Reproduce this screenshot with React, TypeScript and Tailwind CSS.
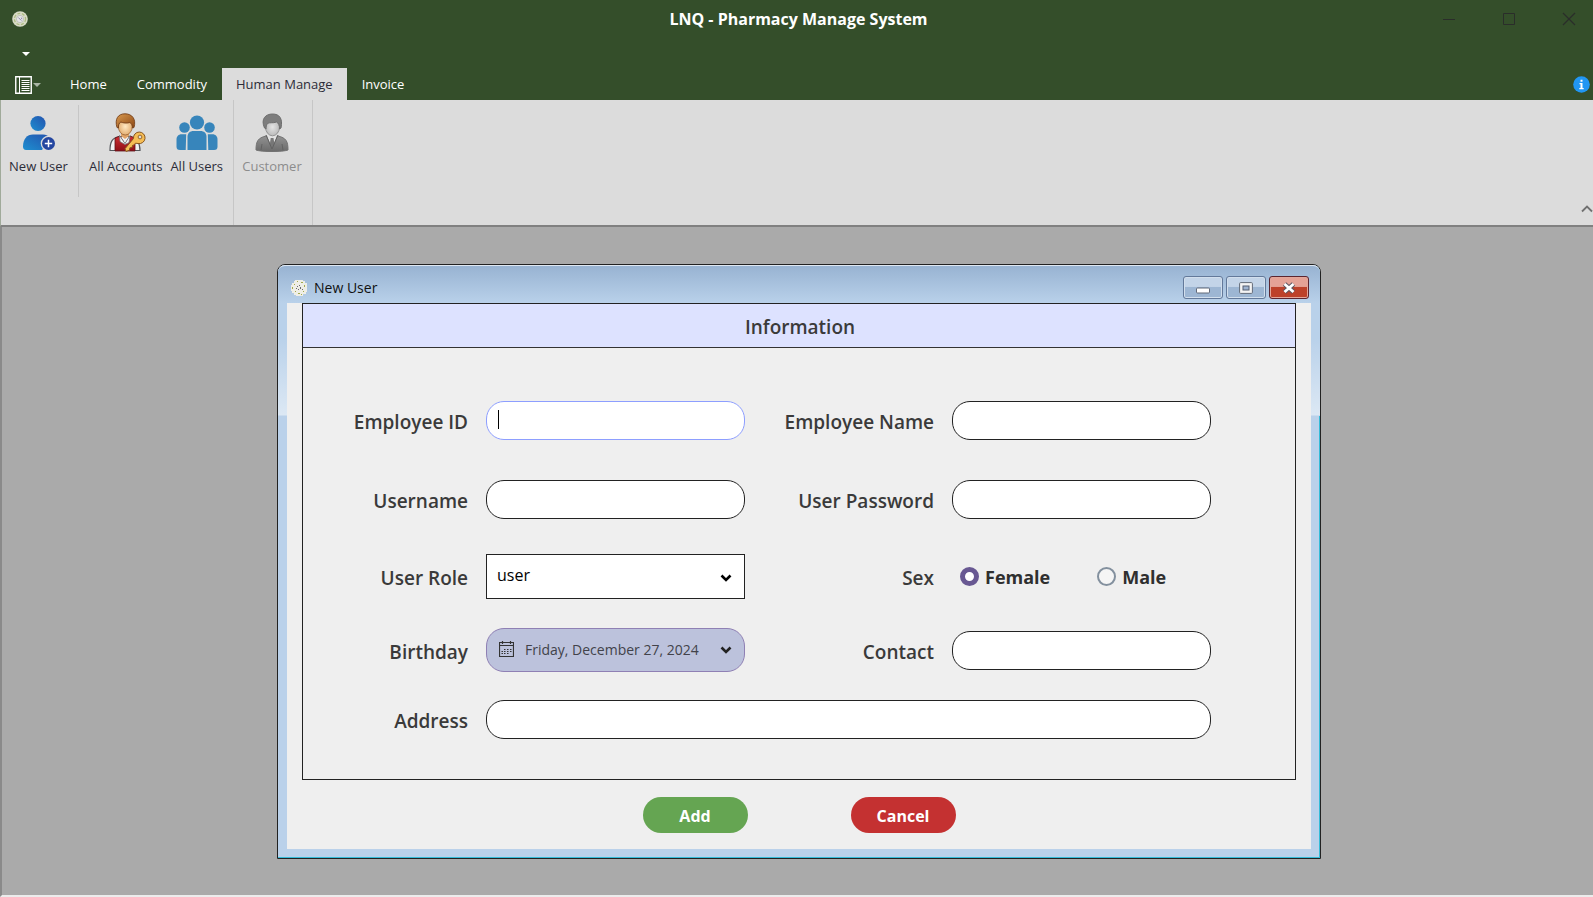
import React, { useState } from "react";

const labelText = "pt-[3px] pr-[18px] text-right text-[19px] leading-6 font-semibold text-[#3a3a3a]";
const textInput =
  "h-[39px] w-full rounded-[18px] border border-[#222] bg-white px-3 text-base text-black outline-none focus:border-[#8d9eff]";

function DiscIcon({ className }: { className: string }) {
  return (
    <svg className={className} viewBox="0 0 16 16" aria-hidden="true">
      <circle cx="8" cy="8" r="7.8" fill="#d9dcc8" />
      <circle cx="8" cy="8" r="5.6" fill="none" stroke="#aebd84" strokeWidth="1.3" strokeDasharray="3 1.6" />
      <circle cx="8" cy="8" r="3.6" fill="#e6e6e8" stroke="#b5b9b0" strokeWidth=".7" />
      <path d="M6.3 6.5l3 3M9.3 6.6l.6 1.6" stroke="#8a86a8" strokeWidth="1" />
    </svg>
  );
}

function SpeckIcon({ className }: { className: string }) {
  return (
    <svg className={className} viewBox="0 0 16 16" aria-hidden="true">
      <path d="M4 0h8v1h2v2h2v9h-1v2h-3v2H5v-1H3v-2H1v-2H0V5h1V3h2V1h1z" fill="#efeee6" />
      <path
        d="M6 1h1v1H6zM10 2h2v1h-2zM3 4h1v1H3zM13 5h1v2h-1zM1 7h1v2H1zM4 11h1v1H4zM7 13h2v1H7zM12 11h1v1h-1zM10 14h1v1h-1z"
        fill="#a3ab4c"
      />
      <path d="M6 6h1v1H6zM8 5h1v1H8zM9 7h1v2H9zM7 9h1v1H7zM5 8h1v1H5zM11 9h1v1h-1z" fill="#6b6872" />
    </svg>
  );
}

function NewUserIcon() {
  return (
    <svg className="h-10 w-10" viewBox="0 0 40 40" aria-hidden="true">
      <defs>
        <linearGradient id="nu" x1="0" y1="1" x2="1" y2="0">
          <stop offset="0" stopColor="#1e8fd0" />
          <stop offset="1" stopColor="#2352ae" />
        </linearGradient>
      </defs>
      <circle cx="20" cy="10.5" r="7.6" fill="url(#nu)" />
      <path d="M5 33.5C5 26 9 21.5 15 21.5h10c3 0 5.500 1.300 7 3.200L24 37H8c-2 0-3-1.200-3-3.500z" fill="url(#nu)" />
      <circle cx="30.500" cy="30.500" r="7.800" fill="#dcdcdc" />
      <circle cx="30.500" cy="30.500" r="6.500" fill="#2446a0" />
      <path d="M30.500 26.800v7.400M26.800 30.500h7.400" stroke="#fff" strokeWidth="1.500" />
    </svg>
  );
}

function AccountsIcon() {
  return (
    <svg className="h-10 w-10" viewBox="0 0 40 40" aria-hidden="true">
      <defs>
        <radialGradient id="face">
          <stop offset="0" stopColor="#ffe9c4" />
          <stop offset="1" stopColor="#e4b074" />
        </radialGradient>
        <linearGradient id="hair" x1="0" y1="0" x2="1" y2="1">
          <stop offset="0" stopColor="#d99a50" />
          <stop offset="1" stopColor="#8c4713" />
        </linearGradient>
        <linearGradient id="vest" x1="0" y1="0" x2="0" y2="1">
          <stop offset="0" stopColor="#cf2e33" />
          <stop offset="1" stopColor="#8f0f18" />
        </linearGradient>
      </defs>
      <path d="M4 37.500c0-8.500 2-12.500 9-14h10c7 1 11 5.500 11 14z" fill="#f1f1f3" stroke="#55575c" strokeWidth="1.200" />
      <path d="M9 38V25l5-2 5 8 5-8 5 2v13z" fill="url(#vest)" stroke="#5e1218" strokeWidth=".8" />
      <path d="M13.500 22.500l5.500 8 5-8-1 7-4 2-5-3z" fill="#f7f7f7" stroke="#72777b" strokeWidth=".8" />
      <path d="M15 19h8v4l-4 3-4-3z" fill="#e0a468" />
      <ellipse cx="19.300" cy="13.500" rx="7" ry="8.500" fill="url(#face)" stroke="#8e572b" strokeWidth=".7" />
      <path
        d="M11 14.500C8.500 6 12 .800 19 .800S30.500 6 28 14.500l-1.600.5c.3-3-1-4.500-2.500-5.500-3 1-7 .5-9-.5-2 1-2.700 3-2.400 6z"
        fill="url(#hair)"
        stroke="#764018"
        strokeWidth=".9"
      />
      <path
        d="M27.500 25.500a5.800 5.800 0 1 1 4.500 5l-2.500-.3-2 2-1 .2-.4 2-2.200.4-.5 2.400-3.400 1.200-1-2.700z"
        fill="#f5bd55"
        stroke="#87551e"
        strokeWidth="1"
      />
      <circle cx="34" cy="24" r="1.900" fill="#dcdcdc" stroke="#9b6729" strokeWidth="1" />
    </svg>
  );
}

function UsersIcon() {
  return (
    <svg className="h-10 w-[42px]" viewBox="0 0 42 40" fill="#3785bb" aria-hidden="true">
      <circle cx="21" cy="9.500" r="7.100" />
      <circle cx="8.500" cy="14.500" r="5.300" />
      <circle cx="33.500" cy="14.500" r="5.300" />
      <path d="M11.500 37V24c0-4 2.500-6 6-6h7c3.500 0 6 2 6 6v13z" />
      <path d="M9.700 37H4c-2.500 0-3.500-1-3.500-3.500v-7c0-3 2-5.200 5-5.200h4.700z" />
      <path d="M32.300 37H38c2.500 0 3.500-1 3.500-3.500v-7c0-3-2-5.200-5-5.200h-4.700z" />
    </svg>
  );
}

function CustomerIcon() {
  return (
    <svg className="h-10 w-10" viewBox="0 0 40 40" aria-hidden="true">
      <defs>
        <linearGradient id="suit" x1="0" y1="0" x2="0" y2="1">
          <stop offset="0" stopColor="#929292" />
          <stop offset="1" stopColor="#6b6b6b" />
        </linearGradient>
        <radialGradient id="gface">
          <stop offset="0" stopColor="#e4e4e4" />
          <stop offset="1" stopColor="#bbb" />
        </radialGradient>
      </defs>
      <path d="M4 37c0-9 2-12 10-14h12c8 2 10 5 10 14-5 2-27 2-32 0z" fill="url(#suit)" stroke="#717171" />
      <path d="M14.500 21.500L20 35l5.500-13.500z" fill="#e2e2e2" />
      <path d="M18.700 25h2.800l1 7-2.400 4-2.400-4z" fill="#777" />
      <path d="M14 22l6 14M26 22l-6 14M10 31l-1 6M30 31l1 6" fill="none" stroke="#626262" />
      <ellipse cx="20.500" cy="14" rx="7" ry="8.800" fill="url(#gface)" stroke="#858585" strokeWidth=".8" />
      <path
        d="M12.500 15c-4-9 1-14 8-14S31 5.500 29 15l-1.500 1c.2-4-1-6-3-7-4 1.500-7 0-9 1.500-1 1.500-1.500 2.500-1.500 5.500z"
        fill="#7d7d7d"
        stroke="#6e6e6e"
      />
    </svg>
  );
}

function Chevron({ className }: { className: string }) {
  return (
    <svg className={className} viewBox="0 0 12 8" fill="none" aria-hidden="true">
      <path d="M1.500 1.500L6 6l4.500-4.500" stroke="currentColor" strokeWidth="2.600" />
    </svg>
  );
}

function RibbonButton({ label, disabled, children }: { label: string; disabled?: boolean; children: React.ReactNode }) {
  return (
    <button
      type="button"
      disabled={disabled}
      className="flex flex-col items-center gap-[3px] text-[13px] leading-5 whitespace-nowrap text-[#2c2c38] disabled:text-[#8c8c8c]"
    >
      {children}
      {label}
    </button>
  );
}

const tabs = ["Home", "Commodity", "Human Manage", "Invoice"];

export default function App() {
  const [tab, setTab] = useState("Human Manage");
  return (
    <div className="flex min-h-screen flex-col bg-[#aaa] font-['Open_Sans',sans-serif]">
      <header className="bg-[#344e2a] text-white">
        <div className="grid h-10 grid-cols-[1fr_auto_1fr] items-center pb-[2px]">
          <DiscIcon className="ml-3 h-4 w-4" />
          <h1 className="pl-1 text-base leading-6 font-bold">LNQ - Pharmacy Manage System</h1>
          <div className="flex justify-end gap-3 text-[#2a2d2a]">
            <button type="button" aria-label="Minimize" className="flex w-12 justify-center">
              <svg className="h-[14px] w-[14px]" viewBox="0 0 14 14"><path d="M1 7.500h12" stroke="currentColor" /></svg>
            </button>
            <button type="button" aria-label="Maximize" className="flex w-12 justify-center">
              <svg className="h-[14px] w-[14px]" viewBox="0 0 14 14" fill="none"><path d="M1.500 1.500h11v11h-11z" stroke="currentColor" /></svg>
            </button>
            <button type="button" aria-label="Close" className="flex w-12 justify-center">
              <svg className="h-[14px] w-[14px]" viewBox="0 0 14 14"><path d="M1 1l12 12M13 1L1 13" stroke="currentColor" strokeWidth="1.200" /></svg>
            </button>
          </div>
        </div>
        <div className="flex h-7 items-center pl-[22px]">
          <button type="button" aria-label="Customize quick access">
            <svg className="h-1 w-2" viewBox="0 0 8 4"><path d="M0 0h8L4 4z" fill="#fff" /></svg>
          </button>
        </div>
        <nav className="flex h-8 items-stretch pl-[15px] text-[13px]">
          <button type="button" aria-label="Application menu" className="flex w-10 items-center gap-px pt-px">
            <svg className="h-[18px] w-[17px]" viewBox="0 0 17 18" fill="none" stroke="#fff">
              <path d="M.75.75h15.500v16.500H.75z" strokeWidth="1.400" />
              <path d="M4.500 1v16M6.500 4.500h8M6.500 6.500h8M6.500 8.500h8M6.500 10.500h8M6.500 12.500h8M6.500 14.500h8" />
            </svg>
            <svg className="h-1 w-2" viewBox="0 0 8 4"><path d="M0 0h8L4 4z" fill="#aab5a5" /></svg>
          </button>
          {tabs.map((t) => (
            <button
              key={t}
              type="button"
              onClick={() => setTab(t)}
              className={
                t === tab ? "bg-[#dcdcdc] px-[14px] pt-px text-[#2c2c38]" : "px-[15px] pt-px text-white"
              }
            >
              {t}
            </button>
          ))}
          <button type="button" aria-label="About" className="ml-auto pr-[3px]">
            <svg className="h-[17px] w-[17px]" viewBox="0 0 17 17">
              <circle cx="8.500" cy="8.500" r="8.300" fill="#2196f3" />
              <path d="M7.500 3.700h2v2h-2zM6.500 7h3v5h1.200v1.200H6.300V12h1.200V8.200h-1z" fill="#fff" />
            </svg>
          </button>
        </nav>
      </header>

      <section className="flex h-[127px] border-b-2 border-l border-[#808080] border-l-[#a0aa9a] bg-[#dcdcdc]">
        <div className="my-[5px] flex h-[92px] w-[78px] items-start justify-center border-r border-[#c6c6c6] pt-2 pr-[2px]">
          <RibbonButton label="New User"><NewUserIcon /></RibbonButton>
        </div>
        <div className="flex w-[155px] items-start justify-center gap-2 border-r border-[#c6c6c6] pt-[13px]">
          <RibbonButton label="All Accounts"><AccountsIcon /></RibbonButton>
          <RibbonButton label="All Users"><UsersIcon /></RibbonButton>
        </div>
        <div className="flex w-[79px] items-start justify-center border-r border-[#c6c6c6] pt-[13px] pr-[2px]">
          <RibbonButton label="Customer" disabled><CustomerIcon /></RibbonButton>
        </div>
        <button type="button" aria-label="Collapse ribbon" className="mb-[10px] ml-auto self-end text-[#707070]">
          <svg className="h-3 w-3" viewBox="0 0 12 12" fill="none"><path d="M1 8.500L6 3.500l5 5" stroke="currentColor" strokeWidth="1.800" /></svg>
        </button>
      </section>

      <main className="flex flex-1 items-start justify-center border-b-2 border-l-2 border-b-[#ececec] border-l-[#8a8a8a] pt-[37px] pl-[3px]">
        <section className="w-full max-w-[1044px] rounded-t-lg border border-[#222] bg-[#bad1ea] shadow-[inset_-1px_-1px_0_#35bcd8]">
          <div className="flex h-[38px] items-center rounded-t-[7px] border-t border-[#dfe8f2] bg-gradient-to-b from-[#98b3d2] to-[#b9d1ea] pr-[11px] pl-[13px]">
            <SpeckIcon className="mt-[6px] mr-[7px] h-4 w-4" />
            <h2 className="mt-[7px] text-sm leading-5 text-[#111]">New User</h2>
            <div className="mt-[6px] ml-auto flex gap-[3px]">
              <button type="button" aria-label="Minimize window" className="flex h-[23px] w-10 items-center justify-center rounded-[3px] border border-[#63799a] bg-linear-to-b from-[#c3d4e8] from-45% to-[#9db6d3] to-50% shadow-[inset_0_0_0_1px_#d2dfed]">
                <svg className="h-3 w-[14px]" viewBox="0 0 14 12"><rect x=".5" y="6" width="13" height="5" rx="1" fill="#fff" stroke="#626a78" /></svg>
              </button>
              <button type="button" aria-label="Maximize window" className="flex h-[23px] w-10 items-center justify-center rounded-[3px] border border-[#63799a] bg-linear-to-b from-[#c3d4e8] from-45% to-[#9db6d3] to-50% shadow-[inset_0_0_0_1px_#d2dfed]">
                <svg className="h-3 w-[14px]" viewBox="0 0 14 12"><rect x=".6" y=".6" width="12.800" height="10.800" rx="1" fill="#f4f4f4" stroke="#626a78" /><rect x="4" y="4" width="6" height="4" fill="#9eb3d0" stroke="#555e70" /></svg>
              </button>
              <button type="button" aria-label="Close window" className="flex h-[23px] w-10 items-center justify-center rounded-[3px] border border-[#5c2530] bg-linear-to-b from-[#e5a296] from-45% to-[#bd412a] to-50% shadow-[inset_0_0_0_1px_#e3a79b]">
                <svg className="h-3 w-[14px]" viewBox="0 0 14 12"><path d="M2.500 2l9 8M11.500 2l-9 8" stroke="#5c5560" strokeWidth="4.800" /><path d="M2.500 2l9 8M11.500 2l-9 8" stroke="#fff" strokeWidth="2.800" /></svg>
              </button>
            </div>
          </div>

          <div className="bg-[linear-gradient(to_bottom,#b9d1ea,#b9d1ea_35px,#dce8f4_112px,#bad1ea_113px)] bg-[length:7px_113px] bg-[position:0_0,100%_0] bg-repeat-x px-[9px] pb-[9px]">
            <form className="bg-[#efefef] px-[15px] pb-4" onSubmit={(e) => e.preventDefault()}>
              <div className="border border-[#222]">
                <h3 className="flex h-[44px] items-center justify-center border-b border-[#333] bg-[#dde2ff] pt-[3px] pl-[2px] text-[19px] leading-6 font-semibold text-[#3a3a3a]">
                  Information
                </h3>
                <div className="grid grid-cols-[183px_1fr_207px_1fr] grid-rows-[80px_78px_76px_72px_66px] items-center pt-8 pr-[84px] pb-[27px]">
                  <label htmlFor="employee-id" className={labelText}>Employee ID</label>
                  <div className="relative flex">
                    <input id="employee-id" className="h-[39px] w-full rounded-[18px] border border-[#8d9eff] bg-white px-3 text-base text-black caret-transparent outline-none" />
                    <span className="pointer-events-none absolute top-[9px] left-3 h-[19px] w-px bg-black" />
                  </div>
                  <label htmlFor="employee-name" className={labelText}>Employee Name</label>
                  <input id="employee-name" className={textInput} />

                  <label htmlFor="username" className={labelText}>Username</label>
                  <input id="username" className={textInput} />
                  <label htmlFor="password" className={labelText}>User Password</label>
                  <input id="password" type="password" className={textInput} />

                  <label htmlFor="role" className={labelText}>User Role</label>
                  <div className="relative flex">
                    <select id="role" className="h-[45px] w-full appearance-none border border-[#222] bg-white pr-8 pb-[2px] pl-[10px] text-base text-black outline-none">
                      <option>user</option>
                      <option>admin</option>
                    </select>
                    <Chevron className="pointer-events-none absolute top-5 right-[13px] h-2 w-3 text-black" />
                  </div>
                  <span id="sex-label" className={labelText}>Sex</span>
                  <div role="radiogroup" aria-labelledby="sex-label" className="flex gap-[47px] pt-px pl-2 text-lg leading-6 font-bold text-[#2f2f2f]">
                    <label className="flex items-center gap-[6px]">
                      <input type="radio" name="sex" defaultChecked className="h-[19px] w-[19px] appearance-none rounded-full border-2 border-[#83909e] bg-white checked:border-[5px] checked:border-[#685892]" />
                      Female
                    </label>
                    <label className="flex items-center gap-[6px]">
                      <input type="radio" name="sex" className="h-[19px] w-[19px] appearance-none rounded-full border-2 border-[#83909e] bg-[#f5f5f5] checked:border-[5px] checked:border-[#685892]" />
                      Male
                    </label>
                  </div>

                  <label htmlFor="birthday" className={labelText}>Birthday</label>
                  <button
                    id="birthday"
                    type="button"
                    className="flex h-[44px] w-full items-center rounded-[18px] border border-[#8f80b4] bg-[#bcc2dc] pr-3 pl-[12px] text-sm whitespace-nowrap text-[#42424a]"
                  >
                    <svg className="mr-[11px] mb-[2px] h-4 w-[15px] shrink-0" viewBox="0 0 15 16" fill="none" stroke="#333" aria-hidden="true">
                      <path d="M.5 1.500h14v14H.5zM.5 4.500h14M3.500 0v3M11.500 0v3" strokeWidth="1.200" />
                      <path d="M5 8.500h1.500M8 8.500h1.500M11 8.500h1.500M2.500 10.500H4M5 10.500h1.500M8 10.500h1.500M11 10.500h1.500M2.500 12.500H4M5 12.500h1.500M8 12.500h1.500" />
                    </svg>
                    Friday, December 27, 2024
                    <Chevron className="ml-auto h-2 w-3 text-[#222]" />
                  </button>
                  <label htmlFor="contact" className={labelText}>Contact</label>
                  <input id="contact" className={textInput} />

                  <label htmlFor="address" className={labelText}>Address</label>
                  <div className="col-span-3 flex">
                    <input id="address" className={textInput} />
                  </div>
                </div>
              </div>
              <div className="flex justify-center gap-[103px] pt-[17px] text-base font-bold text-white">
                <button type="submit" className="h-9 w-[105px] rounded-full bg-[#65a552] pt-[2px]">Add</button>
                <button type="button" className="h-9 w-[105px] rounded-full bg-[#c43131] pt-[2px]">Cancel</button>
              </div>
            </form>
          </div>
        </section>
      </main>
    </div>
  );
}
